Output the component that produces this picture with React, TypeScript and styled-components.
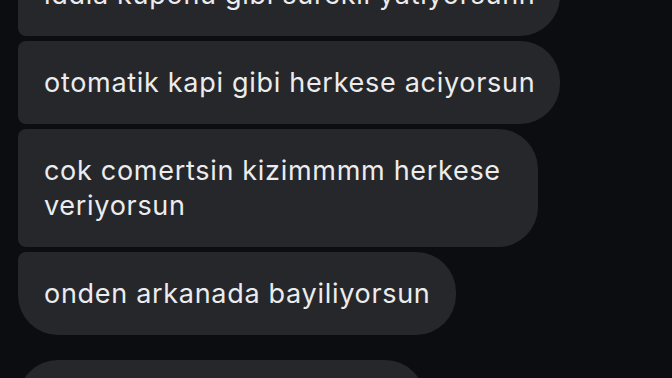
import React from 'react';
import styled, { createGlobalStyle, css } from 'styled-components';

const GlobalStyle = createGlobalStyle`
  html, body {
    margin: 0;
    padding: 0;
    background: #0b0d11;
  }
  body {
    width: 672px;
    height: 378px;
    overflow: hidden;
    font-family: Inter, "Noto Sans", sans-serif;
    -webkit-font-smoothing: antialiased;
  }
`;

const Screen = styled.div`
  width: 672px;
  height: 378px;
  overflow: hidden;
  background: #0b0d11;
`;

const Thread = styled.div`
  display: flex;
  flex-direction: column;
  align-items: flex-start;
  padding-left: 18px;
  margin-top: -47px;
`;

const Group = styled.div`
  display: flex;
  flex-direction: column;
  align-items: flex-start;
  gap: 5px;
  margin-bottom: 25px;
`;

type Pos = 'first' | 'middle' | 'last';

const Bubble = styled.div<{ $pos: Pos; $width?: number }>`
  box-sizing: border-box;
  min-height: 83px;
  padding: 24px 25px 24px 26px;
  background: #25272b;
  color: #ececee;
  font-size: 27px;
  line-height: 35px;
  letter-spacing: 0.7px;
  white-space: pre-line;
  border-radius: 40px;
  ${({ $pos }) =>
    $pos !== 'first' &&
    css`
      border-top-left-radius: 8px;
    `}
  ${({ $pos }) =>
    $pos !== 'last' &&
    css`
      border-bottom-left-radius: 8px;
    `}
  ${({ $width }) =>
    $width &&
    css`
      width: ${$width}px;
    `}
`;

const messages: { text: string; width?: number }[] = [
  { text: 'iddia kuponu gibi surekli yatiyorsunn' },
  { text: 'otomatik kapi gibi herkese aciyorsun' },
  { text: 'cok comertsin kizimmmm herkese\nveriyorsun', width: 520 },
  { text: 'onden arkanada bayiliyorsun' },
];

const App: React.FC = () => {
  return (
    <Screen>
      <GlobalStyle />
      <Thread>
        <Group>
          {messages.map((m, i) => (
            <Bubble
              key={i}
              $pos={i === messages.length - 1 ? 'last' : 'middle'}
              $width={m.width}
            >
              {m.text}
            </Bubble>
          ))}
        </Group>
        <Group>
          <Bubble $pos="first" $width={407} />
        </Group>
      </Thread>
    </Screen>
  );
};

export default App;
